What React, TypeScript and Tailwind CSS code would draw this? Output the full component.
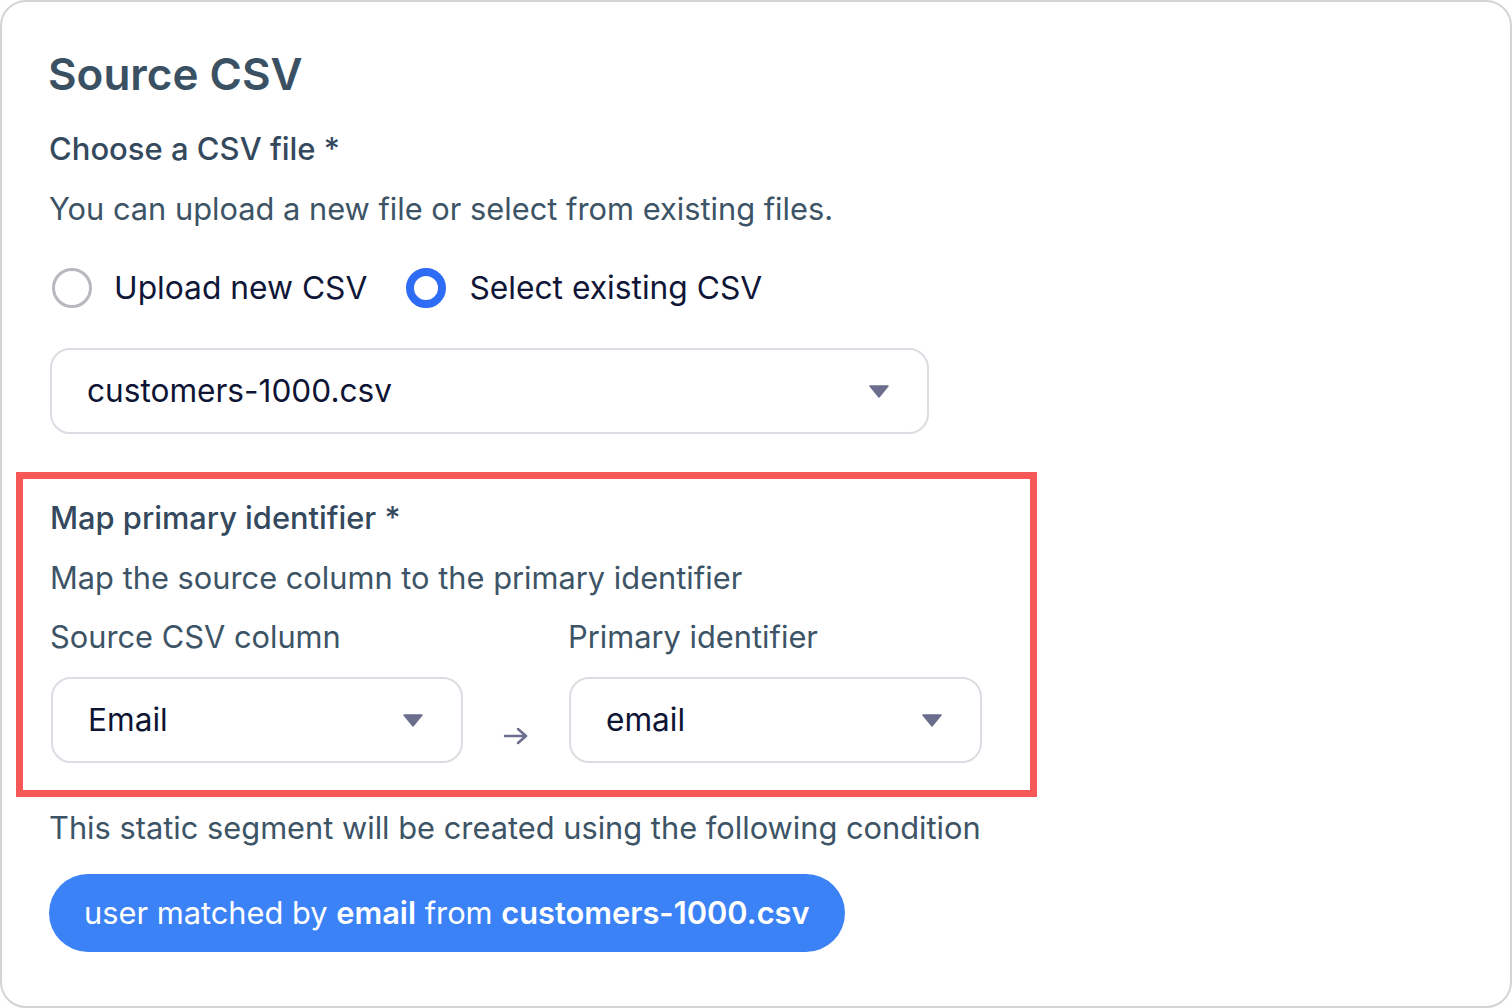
import React from "react";

function Caret() {
  return (
    <svg width="20" height="13" viewBox="0 0 20 13" className="shrink-0">
      <path d="M1 1 H19 L10 12 Z" fill="#6b6e8c" stroke="#6b6e8c" strokeWidth="1.5" strokeLinejoin="round" />
    </svg>
  );
}

function SelectBox({ value, className }: { value: string; className: string }) {
  return (
    <div
      className={
        "flex h-[86px] items-center justify-between rounded-[20px] border-2 border-[#dcdce3] bg-white pl-[35px] pr-[38px] " +
        className
      }
    >
      <span className="text-[31.6px] leading-[40px] text-[#0e1433]">{value}</span>
      <Caret />
    </div>
  );
}

export default function App() {
  return (
    <div
      className="h-[1008px] w-[1512px] overflow-hidden bg-white"
      style={{ fontFamily: "Inter, 'Noto Sans', sans-serif" }}
    >
      <div className="flex h-[1008px] w-[1512px] flex-col rounded-[26px] border-2 border-[#d4d4d8] bg-white pl-[47px] pt-[45px]">
        <h1 className="ml-[-1px] text-[44px] font-semibold leading-[54px] text-[#3a5164]">Source CSV</h1>

        <div className="mt-[28px] text-[31px] font-medium leading-[40px] text-[#34495d]">Choose a CSV file *</div>
        <div className="mt-[20px] text-[30.8px] leading-[40px] text-[#3d5466]">
          You can upload a new file or select from existing files.
        </div>

        <div className="mt-[37px] flex h-[44px] items-center">
          <div className="ml-[3px] h-[40px] w-[40px] rounded-full border-[3px] border-[#b7b8c0] bg-white" />
          <span className="ml-[22px] text-[31.75px] leading-[40px] text-[#0f1638]">Upload new CSV</span>
          <div className="ml-[39px] h-[40px] w-[40px] rounded-full border-[8px] border-[#2e6cf5] bg-white" />
          <span className="ml-[23px] text-[31.75px] leading-[40px] text-[#0f1638]">Select existing CSV</span>
        </div>

        <SelectBox value="customers-1000.csv" className="ml-[1px] mt-[38px] w-[879px]" />

        <div className="ml-[-33px] mt-[38px] w-[1021px] border-[7px] border-[#f65858] pb-[27px] pl-[27px] pt-[19px]">
          <div className="text-[30.8px] font-medium leading-[40px] text-[#34495d]">Map primary identifier *</div>
          <div className="mt-[20px] text-[30.8px] leading-[40px] text-[#3d5466]">
            Map the source column to the primary identifier
          </div>
          <div className="mt-[19px] flex">
            <div className="w-[518px] text-[30.8px] leading-[40px] text-[#3d5466]">Source CSV column</div>
            <div className="text-[30.8px] leading-[40px] text-[#3d5466]">Primary identifier</div>
          </div>
          <div className="mt-[20px] flex items-start pl-[1px]">
            <SelectBox value="Email" className="w-[412px]" />
            <div className="flex w-[106px] justify-center pt-[49px]">
              <svg width="26" height="20" viewBox="0 0 26 20">
                <path d="M2 10 H23 M15 3 L23 10 L15 17" fill="none" stroke="#6b6e8c" strokeWidth="2.5" strokeLinecap="round" strokeLinejoin="round" />
              </svg>
            </div>
            <SelectBox value="email" className="w-[413px]" />
          </div>
        </div>

        <div className="mt-[11px] text-[30.8px] leading-[40px] text-[#3d5466]">
          This static segment will be created using the following condition
        </div>

        <div className="mt-[26px] flex h-[78px] w-fit items-center rounded-full bg-[#3b82f6] px-[35px] text-[30.8px] leading-[40px] text-white">
          <span>
            user matched by <span className="font-semibold">email</span> from{" "}
            <span className="font-semibold">customers-1000.csv</span>
          </span>
        </div>
      </div>
    </div>
  );
}
